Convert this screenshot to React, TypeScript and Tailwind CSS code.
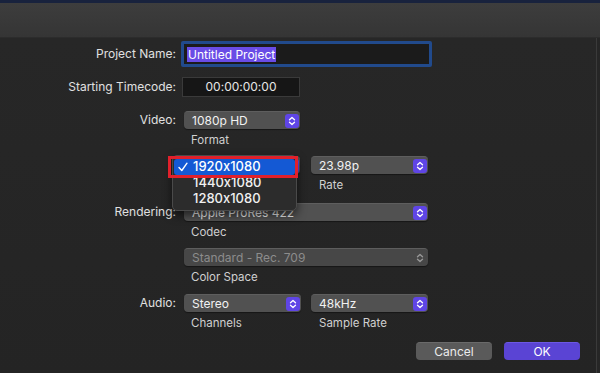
import React from 'react';

function Stepper({ disabled }: { disabled?: boolean }) {
  return (
    <span
      className={`flex h-[14px] w-[14px] items-center justify-center rounded-[3px] ${
        disabled ? 'bg-transparent' : 'bg-[#5f45e6]'
      }`}
    >
      <svg width="8" height="10" viewBox="0 0 8 10" fill="none">
        <path
          d="M1.5 3.8 L4 1.5 L6.5 3.8 M1.5 6.2 L4 8.5 L6.5 6.2"
          stroke={disabled ? '#9a9a9a' : '#ffffff'}
          strokeWidth="1.3"
          strokeLinecap="round"
          strokeLinejoin="round"
        />
      </svg>
    </span>
  );
}

function Popup({ text, width, disabled }: { text: string; width: string; disabled?: boolean }) {
  return (
    <div
      className={`flex h-[18px] items-center justify-between rounded-[4px] border-t border-[#5e5e5e] pl-[8px] pr-[1px] shadow-[0_1px_1px_rgba(0,0,0,0.4)] ${width} ${
        disabled ? 'bg-[#474747] text-[#8c8c8c]' : 'bg-[#515151] text-[#f2f2f2]'
      }`}
    >
      <span className="leading-none">{text}</span>
      <Stepper disabled={disabled} />
    </div>
  );
}

function Row({ label, children, className = '' }: { label?: string; children: React.ReactNode; className?: string }) {
  return (
    <div className={`flex items-center ${className}`}>
      <div className="w-[176px] text-right text-[#e0e0e0]">{label}</div>
      <div className="ml-[6px] flex items-center">{children}</div>
    </div>
  );
}

function SubLabels({ items, className = '' }: { items: string[]; className?: string }) {
  return (
    <div className={`flex h-[14px] items-center pl-[191px] text-[11.5px] text-[#d0d0d0] ${className}`}>
      {items.map((s, i) => (
        <span key={s || i} className={i === 0 ? 'w-[128px]' : ''}>
          {s}
        </span>
      ))}
    </div>
  );
}

export default function App() {
  const sizes = ['1920x1080', '1440x1080', '1280x1080'];

  return (
    <div className="relative flex h-[373px] w-[600px] flex-col overflow-hidden bg-[#262626] font-['Inter',sans-serif] text-[12px] [font-feature-settings:'calt'_0]">
      <div className="h-[3px] bg-[#18223d]" />
      <div className="h-[35px] border-b border-[#2c2c2c] bg-gradient-to-b from-[#3d3d3d] to-[#353535]" />

      <div className="mr-[3px] flex-1 border-r border-[#3a3a3a] bg-gradient-to-b from-[#272727] to-[#242424] pt-[3px]">
        {/* Project name */}
        <Row label="Project Name:" className="h-[26px]">
          <div className="-ml-[1px] flex h-[26px] w-[251px] items-center rounded-[2px] border-[3px] border-[#214a8c] bg-[#1b1b1b] pl-[3px]">
            <span className="bg-[#6a4ce6] px-[1px] leading-[15px] text-white">Untitled Project</span>
          </div>
        </Row>

        {/* Timecode */}
        <Row label="Starting Timecode:" className="mt-[10px] h-[20px]">
          <div className="flex h-[20px] w-[118px] items-center justify-center border border-[#3a3a3a] bg-[#161616] text-[#e6e6e6]">
            00:00:00:00
          </div>
        </Row>

        {/* Video */}
        <Row label="Video:" className="mt-[14px] h-[18px]">
          <div className="ml-[2px]">
            <Popup text="1080p HD" width="w-[116px]" />
          </div>
        </Row>
        <SubLabels items={['Format']} className="mt-[5px]" />

        <Row className="mt-[8px] h-[18px]">
          <div className="ml-[2px] flex gap-[11px]">
            <Popup text="" width="w-[116px]" />
            <Popup text="23.98p" width="w-[117px]" />
          </div>
        </Row>
        <SubLabels items={['', 'Rate']} className="mt-[5px]" />

        {/* Rendering */}
        <Row label="Rendering:" className="mt-[10px] h-[18px]">
          <div className="ml-[2px]">
            <Popup text="Apple ProRes 422" width="w-[244px]" />
          </div>
        </Row>
        <SubLabels items={['Codec']} className="mt-[5px]" />

        <Row className="mt-[8px] h-[18px]">
          <div className="ml-[2px]">
            <Popup text="Standard - Rec. 709" width="w-[244px]" disabled />
          </div>
        </Row>
        <SubLabels items={['Color Space']} className="mt-[5px]" />

        {/* Audio */}
        <Row label="Audio:" className="mt-[9px] h-[18px]">
          <div className="ml-[2px] flex gap-[10px]">
            <Popup text="Stereo" width="w-[117px]" />
            <Popup text="48kHz" width="w-[117px]" />
          </div>
        </Row>
        <SubLabels items={['Channels', 'Sample Rate']} className="mt-[5px]" />

        {/* Buttons */}
        <div className="mt-[11px] flex justify-end gap-[12px] pr-[16px]">
          <button className="h-[18px] w-[76px] rounded-[4px] border-t border-[#6a6a6a] bg-[#5a5a5a] text-[12px] leading-none text-[#ececec]">
            Cancel
          </button>
          <button className="h-[18px] w-[76px] rounded-[4px] border-t border-[#6c58e4] bg-[#5a44d4] text-[12px] leading-none text-white">
            OK
          </button>
        </div>
      </div>

      {/* Open resolution menu */}
      <div className="absolute left-[172px] top-[155px] w-[125px] rounded-[5px] border border-[#4a4a4a] bg-[#2c2c2c] py-[3px] shadow-[0_4px_10px_rgba(0,0,0,0.6)]">
        {sizes.map((s, i) => (
          <div
            key={s}
            className={`relative mx-[1px] flex h-[16px] items-center rounded-[3px] text-[13px] font-medium ${
              i === 0 ? 'bg-[#1459d4] text-white' : 'text-[#f0f0f0]'
            }`}
          >
            <span className="flex w-[19px] items-center pl-[4px]">
              {i === 0 && (
                <svg width="10" height="10" viewBox="0 0 10 10" fill="none">
                  <path d="M1 5.5 L3.8 8.5 L9 1.2" stroke="#ffffff" strokeWidth="1.4" strokeLinecap="round" strokeLinejoin="round" />
                </svg>
              )}
            </span>
            <span>{s}</span>
          </div>
        ))}
      </div>
      {/* Red highlight box */}
      <div className="absolute left-[168px] top-[156px] h-[22px] w-[130px] border-[3px] border-[#e1202b]" />
    </div>
  );
}
